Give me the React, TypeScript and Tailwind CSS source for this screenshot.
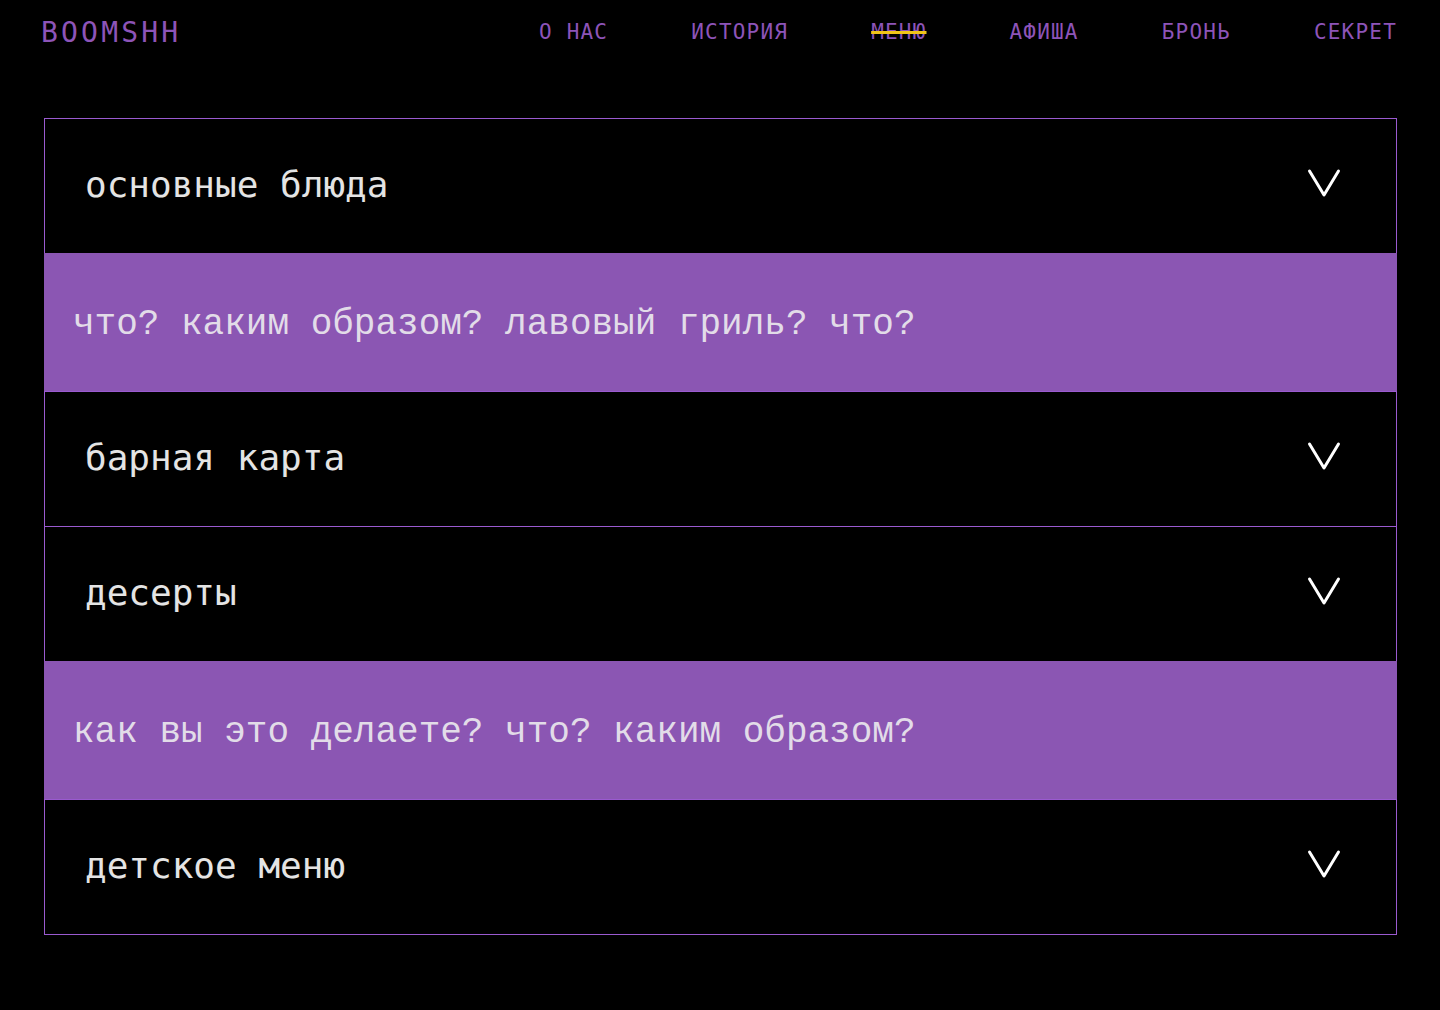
const nav = ['О НАС', 'ИСТОРИЯ', 'МЕНЮ', 'АФИША', 'БРОНЬ', 'СЕКРЕТ'];

const sections = [
  { title: 'основные блюда', panel: 'что? каким образом? лавовый гриль? что?' },
  { title: 'барная карта' },
  { title: 'десерты', panel: 'как вы это делаете? что? каким образом?' },
  { title: 'детское меню' },
];

function Chevron() {
  return (
    <svg width="34" height="30" viewBox="0 0 34 30" fill="none">
      <polyline
        points="2.5,3 17,27 31.5,3"
        stroke="#ffffff"
        strokeWidth="3"
        strokeLinecap="round"
        strokeLinejoin="round"
      />
    </svg>
  );
}

export default function App() {
  return (
    <div className="min-h-[1010px] w-full bg-black">
      <header className="h-[65px] flex items-center justify-between pl-[41px] pr-[43px] font-['DejaVu_Sans_Mono',monospace] text-[#8d54b8]">
        <div className="text-[28px] leading-none tracking-[3.2px]">BOOMSHH</div>
        <nav className="flex items-center gap-[83px] text-[21px] leading-none tracking-[1.2px] font-light">
          {nav.map((item) => (
            <a
              key={item}
              className={
                item === 'МЕНЮ'
                  ? 'line-through decoration-[#f0c419] decoration-[3px]'
                  : ''
              }
            >
              {item}
            </a>
          ))}
        </nav>
      </header>

      <main className="pt-[53px] pl-[44px] pr-[43px]">
        <div className="border border-[#9a5ad0]">
          {sections.map((s, i) => (
            <div key={s.title} className={i > 0 ? 'border-t border-[#9a5ad0]' : ''}>
              <button className="w-full h-[134px] flex items-center justify-between pl-[40px] pr-[55px] text-left">
                <span className="-mt-[2px] font-['DejaVu_Sans_Mono',monospace] text-[36px] leading-none text-[#e4e4e4]">
                  {s.title}
                </span>
                <span className="-mt-[6px]">
                  <Chevron />
                </span>
              </button>
              {s.panel && (
                <div className="h-[138px] flex items-center bg-[#8b56b3] pl-[29px] -mx-px">
                  <p className="pt-[6px] font-['Liberation_Mono',monospace] text-[36px] leading-none text-[#e2dce8]">
                    {s.panel}
                  </p>
                </div>
              )}
            </div>
          ))}
        </div>
      </main>
    </div>
  );
}
